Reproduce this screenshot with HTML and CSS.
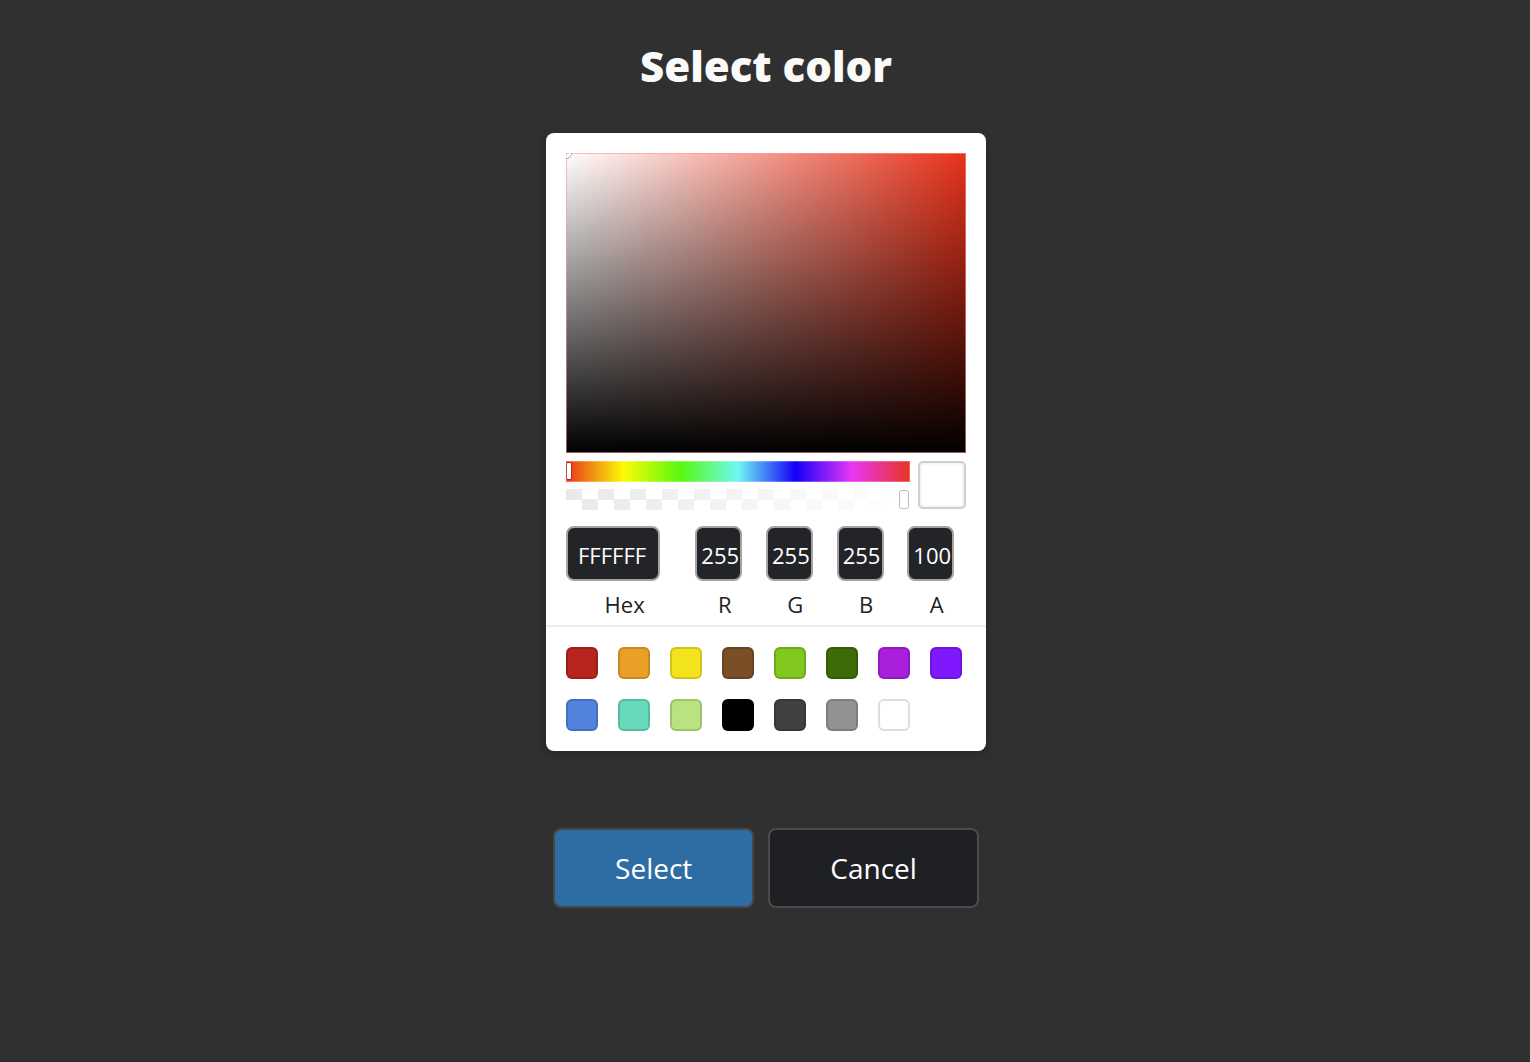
FILE: index.html
```html
<!DOCTYPE html>
<html lang="en">
<head>
<meta charset="utf-8">
<title>Select color</title>
<link rel="stylesheet" href="styles.css">
</head>
<body>
<main class="page">
  <h1 class="title">Select color</h1>
  <section class="picker">
    <div class="picker-body">
      <div class="saturation">
        <span class="sat-pointer"></span>
      </div>
      <div class="controls">
        <div class="sliders">
          <div class="hue"><span class="hue-pointer"></span></div>
          <div class="alpha"><span class="alpha-pointer"></span></div>
        </div>
        <div class="preview"></div>
      </div>
      <div class="fields">
        <label class="field field-hex">
          <input class="field-input" type="text" value="FFFFFF">
          <span class="field-label">Hex</span>
        </label>
        <label class="field">
          <input class="field-input" type="text" value="255">
          <span class="field-label">R</span>
        </label>
        <label class="field">
          <input class="field-input" type="text" value="255">
          <span class="field-label">G</span>
        </label>
        <label class="field">
          <input class="field-input" type="text" value="255">
          <span class="field-label">B</span>
        </label>
        <label class="field">
          <input class="field-input" type="text" value="100">
          <span class="field-label">A</span>
        </label>
      </div>
    </div>
    <div class="presets">
      <span class="swatch c-red"></span>
      <span class="swatch c-orange"></span>
      <span class="swatch c-yellow"></span>
      <span class="swatch c-brown"></span>
      <span class="swatch c-green"></span>
      <span class="swatch c-darkgreen"></span>
      <span class="swatch c-purple"></span>
      <span class="swatch c-violet"></span>
      <span class="swatch c-blue"></span>
      <span class="swatch c-teal"></span>
      <span class="swatch c-lime"></span>
      <span class="swatch c-black"></span>
      <span class="swatch c-charcoal"></span>
      <span class="swatch c-gray"></span>
      <span class="swatch c-white"></span>
    </div>
  </section>
  <div class="actions">
    <button class="btn btn-primary" type="button">Select</button>
    <button class="btn btn-secondary" type="button">Cancel</button>
  </div>
</main>
</body>
</html>
```

FILE: styles.css
```css
* { box-sizing: border-box; }

html, body {
  margin: 0;
  padding: 0;
  background: #303030;
  font-family: "Open Sans", "Noto Sans", sans-serif;
  color: #fff;
}

.page {
  display: flex;
  flex-direction: column;
  align-items: center;
  padding-top: 37px;
  padding-left: 2px;
  min-height: 1062px;
}

.title {
  margin: 0;
  font-size: 42px;
  font-weight: 800;
  line-height: 58px;
  color: #fafafa;
  letter-spacing: 0;
}

.picker {
  margin-top: 38px;
  width: 440px;
  background: #fff;
  border-radius: 8px;
  box-shadow: 0 2px 8px rgba(0, 0, 0, 0.25);
  color: #222;
}

.picker-body {
  padding: 20px 20px 0;
}

.saturation {
  position: relative;
  height: 300px;
  overflow: hidden;
  background:
    linear-gradient(to top, #000, rgba(0, 0, 0, 0)),
    linear-gradient(to right, #fff, rgba(255, 255, 255, 0)),
    #e8321a;
  box-shadow: inset 0 0 0 1px rgba(250, 150, 150, 0.6);
}

.sat-pointer {
  position: absolute;
  left: -5px;
  top: -5px;
  width: 10px;
  height: 10px;
  border-radius: 50%;
  border: 2px solid #fff;
  box-shadow: 0 0 0 1px rgba(0, 0, 0, 0.3);
}

.controls {
  display: flex;
  gap: 8px;
  margin-top: 8px;
}

.sliders {
  flex: 1;
  display: flex;
  flex-direction: column;
  gap: 7px;
}

.hue {
  position: relative;
  height: 21px;
  background: linear-gradient(to right,
    #e8341c 0%,
    #fdfb07 16.7%,
    #58f80f 33.3%,
    #6ef8f4 50%,
    #1400f9 66.7%,
    #ea36f5 83.3%,
    #e8341f 100%);
  box-shadow: inset 0 0 0 1px rgba(255, 255, 255, 0.25);
}

.hue-pointer {
  position: absolute;
  left: 1px;
  top: 2px;
  width: 4px;
  height: 16px;
  background: #fff;
  border-radius: 1px;
  box-shadow: 0 0 0 1px rgba(0, 0, 0, 0.25);
}

.alpha {
  position: relative;
  height: 21px;
  background:
    linear-gradient(to right, rgba(255, 255, 255, 0), #fff),
    repeating-conic-gradient(#fff 0 25%, #e9e9e9 0 50%) 0 0 / 32px 21px;
}

.alpha-pointer {
  position: absolute;
  right: 1px;
  top: 1px;
  width: 10px;
  height: 19px;
  background: #fff;
  border-radius: 3px;
  border: 1px solid #bdbdbd;
}

.preview {
  width: 48px;
  height: 48px;
  background: #fff;
  border: 2px solid #cfcfcf;
  border-radius: 5px;
  box-shadow: inset 0 0 3px rgba(0, 0, 0, 0.15);
}

.fields {
  display: flex;
  margin-top: 16px;
}

.field {
  flex: 1 1 0;
  padding-left: 12px;
  display: flex;
  flex-direction: column;
  align-items: flex-start;
}

.field-hex {
  flex: 2 1 0;
  padding-left: 0;
}

.field-input {
  width: 80%;
  height: 55px;
  padding: 3px 0 0 4px;
  margin: 0;
  border: 2px solid #a3a3a3;
  border-radius: 8px;
  background: #232428;
  color: #fff;
  font-family: "Open Sans", "Noto Sans", sans-serif;
  font-size: 22px;
  outline: none;
}

.field-hex .field-input {
  padding-left: 10px;
}

.field-label {
  align-self: stretch;
  text-align: center;
  font-size: 22px;
  line-height: 28px;
  margin-top: 9px;
  color: #222;
}

.presets {
  margin-top: 7px;
  border-top: 2px solid #eeeeee;
  padding: 20px 20px 20px;
  display: grid;
  grid-template-columns: repeat(8, 32px);
  gap: 20px;
}

.swatch {
  width: 32px;
  height: 32px;
  border-radius: 6px;
  box-shadow: inset 0 0 0 2px rgba(0, 0, 0, 0.14);
}

.c-red { background: #b8251f; }
.c-orange { background: #e8a126; }
.c-yellow { background: #f3e31f; }
.c-brown { background: #7a4f28; }
.c-green { background: #80c81e; }
.c-darkgreen { background: #3f6a08; }
.c-purple { background: #a91fdc; }
.c-violet { background: #7f18fc; }
.c-blue { background: #5082de; }
.c-teal { background: #66dabb; }
.c-lime { background: #b9e37e; }
.c-black { background: #000; }
.c-charcoal { background: #404040; }
.c-gray { background: #929292; }
.c-white { background: #fff; box-shadow: inset 0 0 0 2px #dedede; }

.actions {
  display: flex;
  gap: 14px;
  margin-top: 77px;
}

.btn {
  height: 80px;
  padding: 0 60px;
  border: 2px solid #474747;
  border-radius: 8px;
  color: #fff;
  font-family: "Open Sans", "Noto Sans", sans-serif;
  font-size: 28px;
  cursor: pointer;
}

.btn-primary { background: #2e6ca4; }
.btn-secondary { background: #1f2024; border-color: #4b4b4b; }
```
